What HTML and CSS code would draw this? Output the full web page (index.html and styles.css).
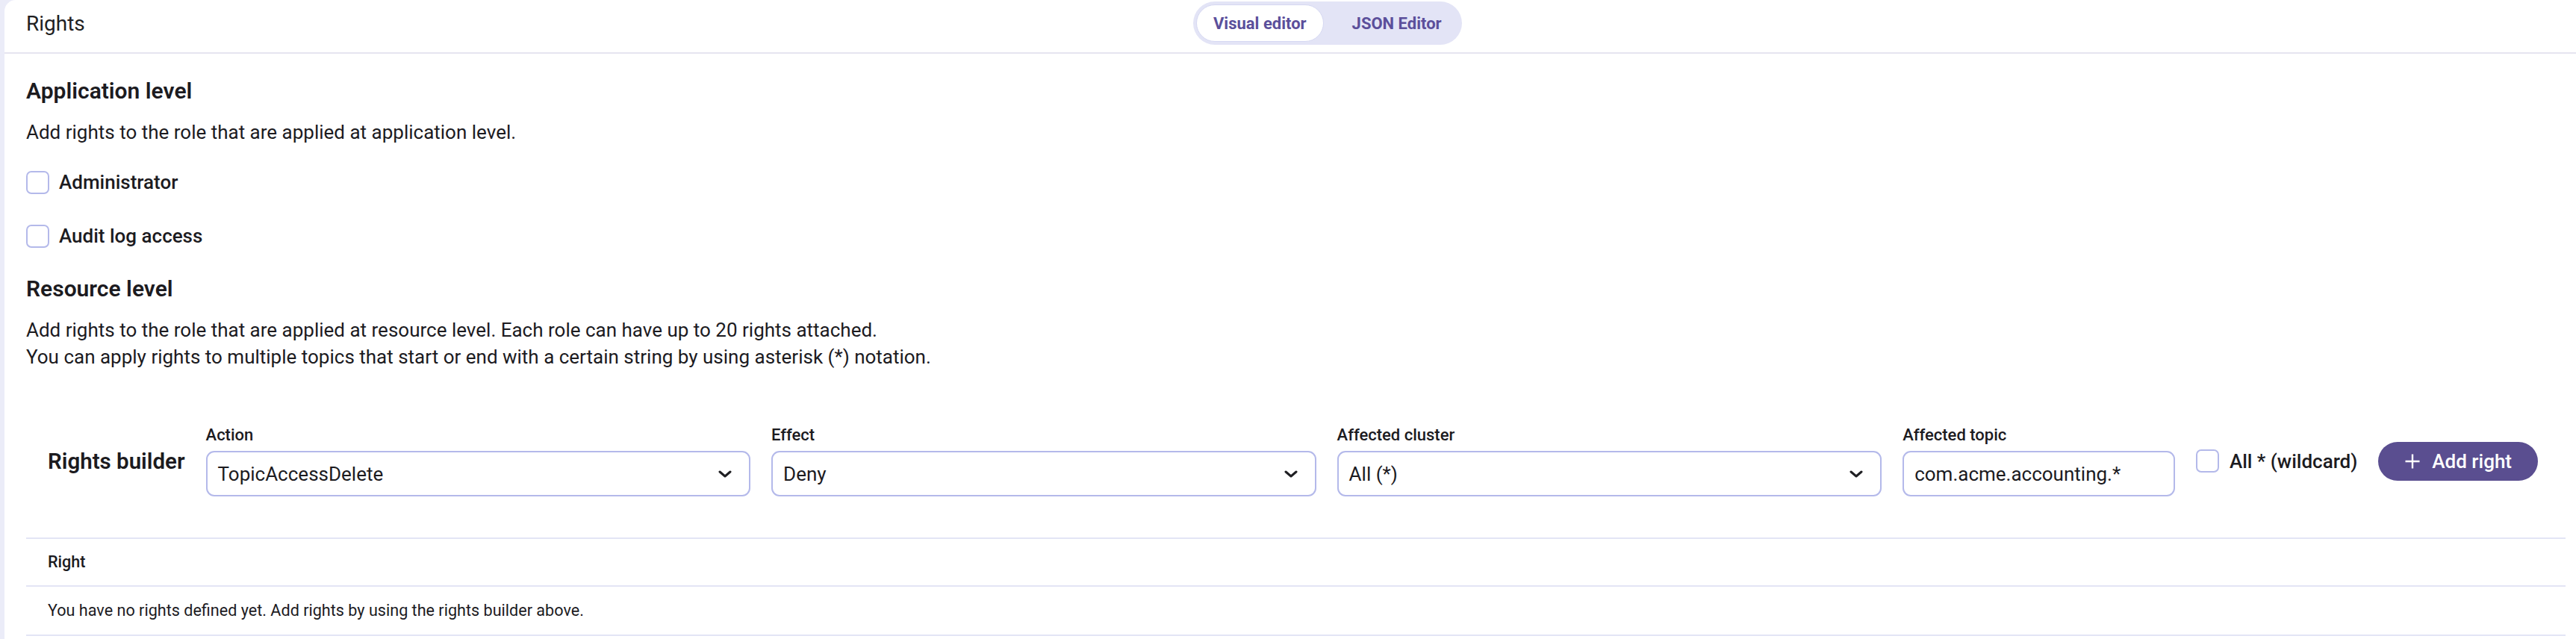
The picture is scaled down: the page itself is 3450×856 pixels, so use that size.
FILE: index.html
```html
<!DOCTYPE html>
<html lang="en">
<head>
<meta charset="utf-8">
<title>Rights</title>
<link rel="stylesheet" href="styles.css">
</head>
<body>
<div class="card">
  <header class="card-head">
    <h2 class="card-title">Rights</h2>
    <div class="toggle">
      <button class="toggle-btn is-active">Visual editor</button>
      <button class="toggle-btn">JSON Editor</button>
    </div>
  </header>
  <div class="card-body">
    <section class="level">
      <h3 class="level-title">Application level</h3>
      <p class="level-text">Add rights to the role that are applied at application level.</p>
      <div class="check-list">
        <label class="check-row"><span class="check-box"></span>Administrator</label>
        <label class="check-row"><span class="check-box"></span>Audit log access</label>
      </div>
    </section>
    <section class="level level-resource">
      <h3 class="level-title">Resource level</h3>
      <p class="level-text">Add rights to the role that are applied at resource level. Each role can have up to 20 rights attached.<br>You can apply rights to multiple topics that start or end with a certain string by using asterisk (*) notation.</p>
    </section>
    <div class="builder">
      <div class="builder-title">Rights builder</div>
      <div class="field field-wide">
        <span class="field-label">Action</span>
        <div class="select"><span>TopicAccessDelete</span><svg class="chevron" viewBox="0 0 18 10" width="18" height="10"><path d="M2 2 L9 8 L16 2"/></svg></div>
      </div>
      <div class="field field-wide">
        <span class="field-label">Effect</span>
        <div class="select"><span>Deny</span><svg class="chevron" viewBox="0 0 18 10" width="18" height="10"><path d="M2 2 L9 8 L16 2"/></svg></div>
      </div>
      <div class="field field-wide">
        <span class="field-label">Affected cluster</span>
        <div class="select"><span>All (*)</span><svg class="chevron" viewBox="0 0 18 10" width="18" height="10"><path d="M2 2 L9 8 L16 2"/></svg></div>
      </div>
      <div class="field field-narrow">
        <span class="field-label">Affected topic</span>
        <div class="select text-input"><span>com.acme.accounting.*</span></div>
      </div>
      <label class="check-row wildcard"><span class="check-box"></span>All * (wildcard)</label>
      <button class="add-btn"><svg class="plus" viewBox="0 0 20 20" width="20" height="20"><path d="M10 0.5 V19.5 M0.5 10 H19.5"/></svg>Add right</button>
    </div>
    <table class="rights-table">
      <thead>
        <tr><th>Right</th></tr>
      </thead>
      <tbody>
        <tr><td>You have no rights defined yet. Add rights by using the rights builder above.</td></tr>
      </tbody>
    </table>
  </div>
</div>
</body>
</html>
```

FILE: styles.css
```css
html, body {
  margin: 0;
  padding: 0;
  height: 100%;
  overflow: hidden;
}

body {
  background: #ebecf8;
  font-family: Roboto, "Liberation Sans", Arial, sans-serif;
  color: #1c1b1f;
}

.card {
  margin-left: 6px;
  min-height: 100%;
  background: #ffffff;
  border-top-left-radius: 15px;
}

.card-head {
  display: flex;
  align-items: center;
  height: 72px;
  box-sizing: border-box;
  padding: 0 0 8px 29px;
  border-bottom: 2px solid #e6e5f0;
}

.card-title {
  flex: 0 0 1563px;
  margin: 0;
  font-size: 28px;
  font-weight: 400;
  color: #1f1f23;
}

.toggle {
  display: flex;
  gap: 15px;
  padding: 4px;
  background: #e3e4f6;
  border-radius: 999px;
}

.toggle-btn {
  height: 50px;
  padding: 0 22px;
  border: 1px solid transparent;
  border-radius: 999px;
  background: transparent;
  font-family: inherit;
  font-size: 22px;
  font-weight: 700;
  color: #5b4f9b;
}

.toggle-btn.is-active {
  background: #ffffff;
  border-color: #d6d8f2;
}

.card-body {
  padding: 32px 14px 0 29px;
}

.level-title {
  margin: 0 0 19px;
  font-size: 30px;
  line-height: 36px;
  font-weight: 600;
}

.level-text {
  margin: 0;
  font-size: 26px;
  line-height: 36px;
}

.check-list {
  display: flex;
  flex-direction: column;
  gap: 36px;
  margin-top: 31px;
}

.check-row {
  display: flex;
  align-items: center;
  gap: 13px;
  height: 36px;
  font-size: 26px;
  font-weight: 500;
}

.check-box {
  flex: 0 0 auto;
  width: 31px;
  height: 31px;
  box-sizing: border-box;
  border: 2px solid #b4b9ea;
  border-radius: 7px;
  background: #ffffff;
}

.level-resource {
  margin-top: 35px;
}

.builder {
  display: flex;
  align-items: center;
  gap: 28px;
  padding: 74px 37px 55px 29px;
}

.builder-title {
  flex: 0 0 auto;
  font-size: 29.5px;
  font-weight: 600;
  white-space: nowrap;
}

.field {
  display: flex;
  flex-direction: column;
  min-width: 0;
}

.field-wide {
  flex: 2 1 0;
}

.field-narrow {
  flex: 1 1 0;
}

.field-label {
  display: block;
  margin-bottom: 8px;
  font-size: 22px;
  line-height: 26px;
  font-weight: 500;
}

.select {
  display: flex;
  align-items: center;
  justify-content: space-between;
  height: 61px;
  box-sizing: border-box;
  padding: 0 23px 0 14px;
  border: 2px solid #b4b9ea;
  border-radius: 11px;
  font-size: 26px;
  color: #1c1b1f;
}

.chevron {
  flex: 0 0 auto;
}

.chevron path {
  fill: none;
  stroke: #1f1f23;
  stroke-width: 3;
  stroke-linecap: round;
  stroke-linejoin: round;
}

.wildcard {
  flex: 0 0 auto;
  gap: 14px;
  white-space: nowrap;
}

.add-btn {
  flex: 0 0 auto;
  display: flex;
  align-items: center;
  gap: 16px;
  height: 52px;
  padding: 0 35px 0 36px;
  border: none;
  border-radius: 26px;
  background: #5a4e90;
  color: #ffffff;
  font-family: inherit;
  font-size: 26px;
  font-weight: 500;
  white-space: nowrap;
}

.plus path {
  fill: none;
  stroke: #ffffff;
  stroke-width: 2.4;
}

.rights-table {
  width: 100%;
  border-collapse: collapse;
  border-top: 2px solid #e3e5f5;
}

.rights-table th,
.rights-table td {
  text-align: left;
  padding: 18px 29px;
  font-size: 21.6px;
  line-height: 26px;
  border-bottom: 2px solid #e3e5f5;
}

.rights-table th {
  font-weight: 500;
}

.rights-table td {
  padding-top: 19px;
  padding-bottom: 19px;
  font-weight: 400;
}
```
